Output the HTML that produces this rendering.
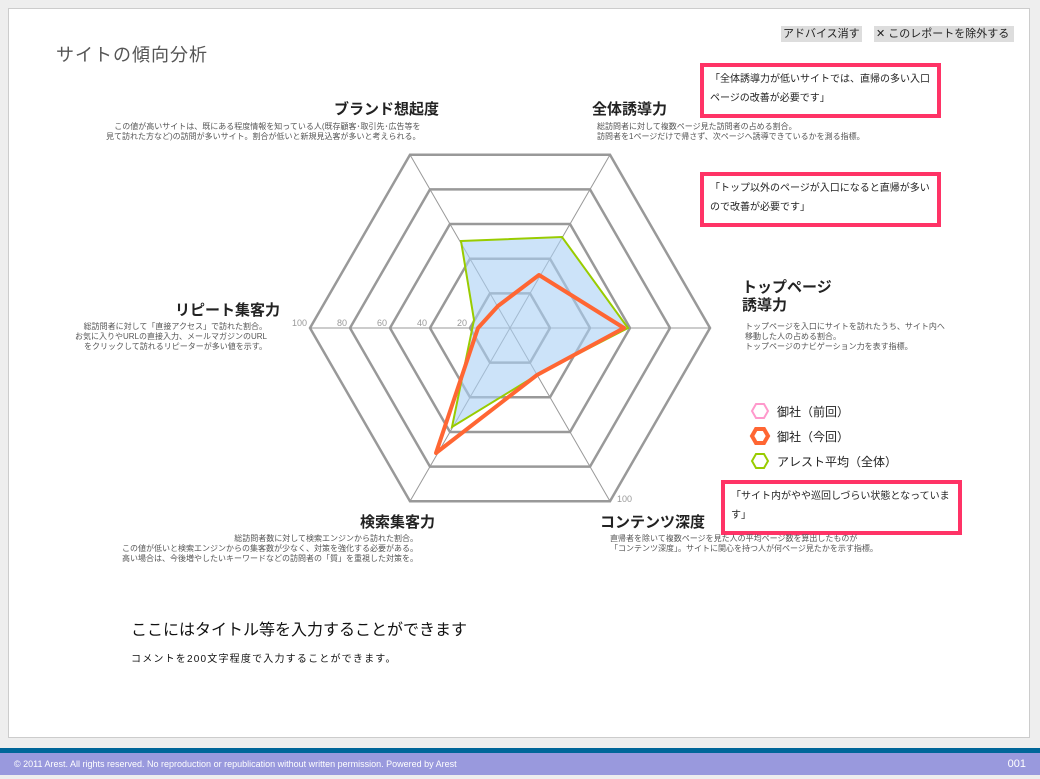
<!DOCTYPE html>
<html><head><meta charset="utf-8"><style>
*{margin:0;padding:0;box-sizing:border-box}
body{width:1040px;height:779px;background:#eee;position:relative;overflow:hidden;font-family:"Liberation Sans","Noto Sans CJK JP",sans-serif;color:#333}
.panel{position:absolute;left:8px;top:8px;width:1022px;height:730px;background:#fff;border:1px solid #ccc}
.a{position:absolute;white-space:nowrap}
.h{font-size:15px;font-weight:bold;color:#222}
.d{font-size:8px;color:#555;line-height:10px}
.btn{position:absolute;top:26px;height:16px;background:#ddd;font-size:11px;line-height:16px;padding:0 2px;color:#222}
.adv{position:absolute;border:4px solid #f36;background:#fff;font-size:10px;line-height:19px;padding:3px 6px;color:#222}
.lg{font-size:12px;color:#222}
.foot1{position:absolute;left:0;top:748px;width:1040px;height:5px;background:#069}
.foot2{position:absolute;left:0;top:753px;width:1040px;height:22px;background:#99d;color:#fff;font-size:9px;line-height:22px;padding-left:14px}
</style></head><body>
<div class="panel"></div>
<div class="a" style="left:56px;top:41px;font-size:18px;letter-spacing:1px;color:#555">サイトの傾向分析</div>
<div class="btn" style="left:781px">アドバイス消す</div>
<div class="btn" style="left:874px;width:140px">✕ このレポートを除外する</div>
<div class="adv" style="left:700px;top:63px;width:241px;height:55px">「全体誘導力が低いサイトでは、直帰の多い入口ページの改善が必要です」</div>
<div class="adv" style="left:700px;top:172px;width:241px;height:55px">「トップ以外のページが入口になると直帰が多いので改善が必要です」</div>
<div class="adv" style="left:721px;top:480px;width:241px;height:55px">「サイト内がやや巡回しづらい状態となっています」</div>

<div class="a h" style="left:334px;top:98px">ブランド想起度</div>
<div class="a d" style="left:106px;top:122px;text-align:right">この値が高いサイトは、既にある程度情報を知っている人(既存顧客･取引先･広告等を<br>見て訪れた方など)の訪問が多いサイト。割合が低いと新規見込客が多いと考えられる。</div>
<div class="a h" style="left:592px;top:98px">全体誘導力</div>
<div class="a d" style="left:597px;top:122px">総訪問者に対して複数ページ見た訪問者の占める割合。<br>訪問者を1ページだけで帰さず、次ページへ誘導できているかを測る指標。</div>
<div class="a h" style="left:742px;top:279px;line-height:18px">トップページ<br>誘導力</div>
<div class="a d" style="left:745px;top:322px">トップページを入口にサイトを訪れたうち、サイト内へ<br>移動した人の占める割合。<br>トップページのナビゲーション力を表す指標。</div>
<div class="a h" style="left:175px;top:299px">リピート集客力</div>
<div class="a d" style="left:75px;top:322px;text-align:right">総訪問者に対して「直接アクセス」で訪れた割合。<br>お気に入りやURLの直接入力、メールマガジンのURL<br>をクリックして訪れるリピーターが多い値を示す。</div>
<div class="a h" style="left:360px;top:511px">検索集客力</div>
<div class="a d" style="left:122px;top:534px;text-align:right">総訪問者数に対して検索エンジンから訪れた割合。<br>この値が低いと検索エンジンからの集客数が少なく、対策を強化する必要がある。<br>高い場合は、今後増やしたいキーワードなどの訪問者の「質」を重視した対策を。</div>
<div class="a h" style="left:600px;top:511px">コンテンツ深度</div>
<div class="a d" style="left:610px;top:534px">直帰者を除いて複数ページを見た人の平均ページ数を算出したものが<br>「コンテンツ深度」。サイトに関心を持つ人が何ページ見たかを示す指標。</div>

<svg class="a" style="left:0;top:0" width="1040" height="779">
<g fill="none" stroke="#999">
<g stroke-width="2.5">
<polygon points="310,328 410,154.8 610,154.8 710,328 610,501.2 410,501.2"/>
<polygon points="350,328 430,189.4 590,189.4 670,328 590,466.6 430,466.6"/>
<polygon points="390,328 450,224 570,224 630,328 570,432 450,432"/>
<polygon points="430,328 470,258.7 550,258.7 590,328 550,397.3 470,397.3"/>
<polygon points="470,328 490,293.4 530,293.4 550,328 530,362.6 490,362.6"/>
</g>
<path d="M310,328H710M410,154.8L610,501.2M610,154.8L410,501.2" stroke-width="1"/>
</g>
<polygon points="461,241 562,237 628,328 537,375 452,427 474,320" fill="#aad0f5" fill-opacity="0.6"/>
<polygon points="461,241 562,237 628,328 537,375 452,427 474,320" fill="none" stroke="#99cc00" stroke-width="2"/>
<polygon points="498,306 539,275 624,328 537,375 436,453 478,328" fill="none" stroke="#ff6633" stroke-width="4" stroke-linejoin="round"/>
<g font-size="9" fill="#999" font-family="Liberation Sans,sans-serif">
<text x="292" y="326">100</text><text x="337" y="326">80</text><text x="377" y="326">60</text><text x="417" y="326">40</text><text x="457" y="326">20</text><text x="617" y="502">100</text>
</g>
<g fill="none" stroke-width="2">
<polygon points="752,411 756,404 764,404 768,411 764,418 756,418" stroke="#f9c"/>
<polygon points="752,436 756,429 764,429 768,436 764,443 756,443" stroke="#f63" stroke-width="4"/>
<polygon points="752,461 756,454 764,454 768,461 764,468 756,468" stroke="#9c0"/>
</g>
</svg>
<div class="a lg" style="left:777px;top:403px">御社（前回）</div>
<div class="a lg" style="left:777px;top:428px">御社（今回）</div>
<div class="a lg" style="left:777px;top:453px">アレスト平均（全体）</div>

<div class="a" style="left:131px;top:616px;font-size:16px;color:#111">ここにはタイトル等を入力することができます</div>
<div class="a" style="left:131px;top:650px;font-size:10px;letter-spacing:1.2px;color:#111">コメントを200文字程度で入力することができます。</div>

<div class="foot1"></div>
<div class="foot2">© 2011 Arest. All rights reserved. No reproduction or republication without written permission. Powered by Arest<span style="position:absolute;right:14px;font-size:11px">001</span></div>
</body></html>
